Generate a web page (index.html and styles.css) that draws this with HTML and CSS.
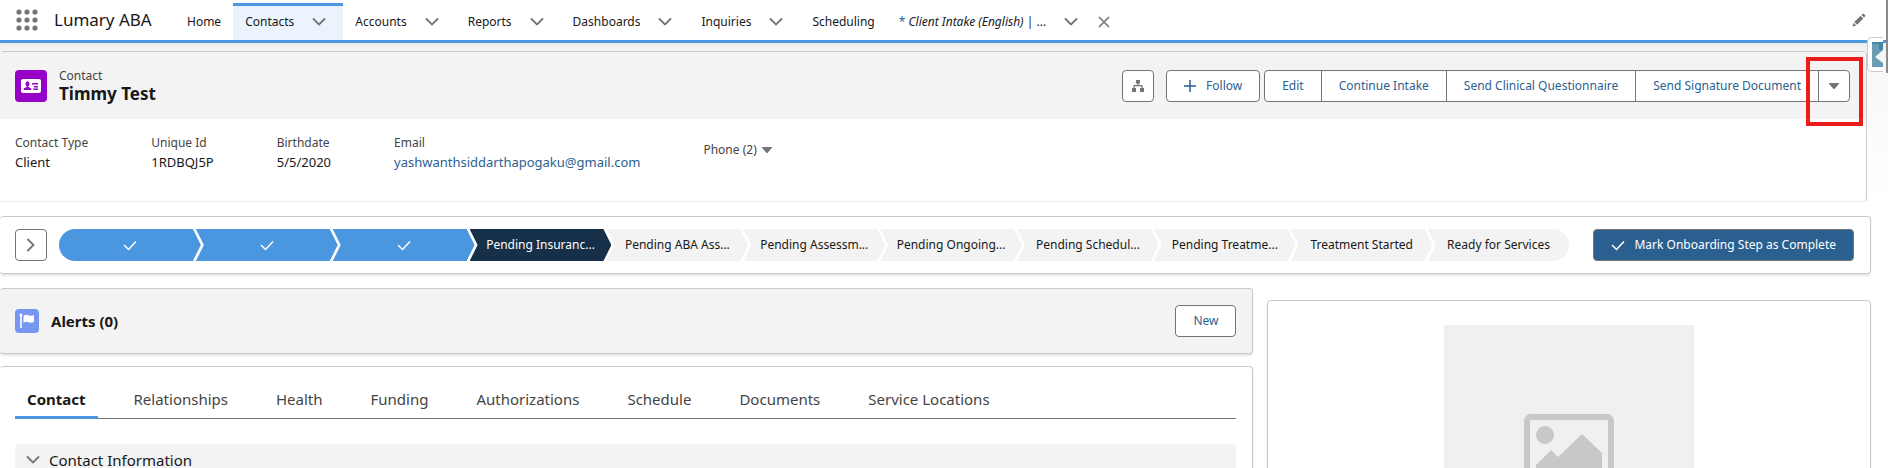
FILE: index.html
```html
<!DOCTYPE html>
<html lang="en">
<head>
    <meta charset="UTF-8">
    <meta name="viewport" content="width=device-width, initial-scale=1.0">
    <title>Timmy Test | Contact</title>
    <link rel="stylesheet" href="styles.css">
</head>
<body>
    <!-- shared icons -->
    <svg class="defs" width="0" height="0">
        <symbol id="chevron" viewBox="0 0 14 14"><path d="M1.5 4 7 9.5l5.5-5.500" fill="none" stroke="currentColor" stroke-width="1.8" stroke-linecap="round"/></symbol>
        <symbol id="check" viewBox="0 0 14 14"><path d="M1 7 5.500 11.500 13 3.500" fill="none" stroke="currentColor" stroke-width="1.5"/></symbol>
        <symbol id="down" viewBox="0 0 14 14"><path d="M2.6 4h8.8q1.2 0 .4 1L7.7 9.8q-.7.7-1.4 0L2.2 5q-.8-1 .4-1z" fill="currentColor"/></symbol>
    </svg>

    <header class="nav">
        <button class="waffle" aria-label="App Launcher">
            <svg width="22" height="22" viewBox="0 0 22 22" fill="#747474">
                <circle cx="3" cy="3" r="2.6"/><circle cx="11" cy="3" r="2.6"/><circle cx="19" cy="3" r="2.6"/>
                <circle cx="3" cy="11" r="2.6"/><circle cx="11" cy="11" r="2.6"/><circle cx="19" cy="11" r="2.6"/>
                <circle cx="3" cy="19" r="2.6"/><circle cx="11" cy="19" r="2.6"/><circle cx="19" cy="19" r="2.6"/>
            </svg>
        </button>
        <span class="app-name">Lumary ABA</span>
        <nav class="nav-items">
            <div class="nav-item"><a href="#">Home</a></div>
            <div class="nav-item active"><a href="#">Contacts</a><button aria-label="Contacts list"><svg class="icon"><use href="#chevron"/></svg></button></div>
            <div class="nav-item"><a href="#">Accounts</a><button aria-label="Accounts list"><svg class="icon"><use href="#chevron"/></svg></button></div>
            <div class="nav-item"><a href="#">Reports</a><button aria-label="Reports list"><svg class="icon"><use href="#chevron"/></svg></button></div>
            <div class="nav-item"><a href="#">Dashboards</a><button aria-label="Dashboards list"><svg class="icon"><use href="#chevron"/></svg></button></div>
            <div class="nav-item"><a href="#">Inquiries</a><button aria-label="Inquiries list"><svg class="icon"><use href="#chevron"/></svg></button></div>
            <div class="nav-item"><a href="#">Scheduling</a></div>
            <div class="nav-item temp"><a href="#"><span class="star">*</span> <i>Client Intake (English)</i> | ...</a><button aria-label="Tab actions"><svg class="icon"><use href="#chevron"/></svg></button><button class="close" aria-label="Close tab"><svg class="icon" viewBox="0 0 14 14"><path d="M2 2l10 10M12 2 2 12" stroke="currentColor" stroke-width="1.6"/></svg></button></div>
        </nav>
        <button class="edit-nav" aria-label="Edit navigation">
            <svg width="14" height="14" viewBox="0 0 14 14" fill="#747474"><path d="M.6 13.4 1.6 9.800 4.200 12.400zM2.300 9 8.600 2.700l2.700 2.700L5 11.700zM9.400 1.900l1-1q.8-.6 1.500 0l1.200 1.200q.7.7 0 1.500l-1 1z"/></svg>
        </button>
    </header>

    <main class="page">
        <section class="card record">
            <div class="record-head">
                <span class="record-icon">
                    <svg width="20" height="14" viewBox="0 0 20 14"><rect width="20" height="14" rx="2" fill="#fff"/><g fill="#9602c7"><ellipse cx="6.500" cy="4.800" rx="2" ry="2.500"/><path d="M5.700 6.500h1.600v1.600l2.300 1q.7.400.7 1.900H2.700q0-1.500.7-1.900l2.300-1z"/><path d="M11 4h6v1.500h-6zM13 7h4v1.500h-4zM12 9.500h5V11h-4.500z"/></g></svg>
                </span>
                <div class="record-title">
                    <span class="entity">Contact</span>
                    <h1>Timmy Test</h1>
                </div>
                <div class="actions">
                    <button class="btn square" aria-label="View hierarchy">
                        <svg width="12" height="12" viewBox="0 0 12 12" fill="#747474"><path d="M4 0h4v3.500H6.600V5h3.200q.8 0 .8.8V8H12v4H8V8h1.400V6.200H2.600V8H4v4H0V8h1.400V5.800q0-.8.8-.8h3.200V3.500H4z"/></svg>
                    </button>
                    <button class="btn follow"><svg width="12" height="12" viewBox="0 0 12 12"><path d="M6 0v12M0 6h12" stroke="#2b5f8f" stroke-width="1.500"/></svg>Follow</button>
                    <div class="group">
                        <button class="btn">Edit</button>
                        <button class="btn">Continue Intake</button>
                        <button class="btn">Send Clinical Questionnaire</button>
                        <button class="btn">Send Signature Document</button>
                        <div class="more">
                            <button class="btn square" aria-label="Show more actions"><svg class="icon"><use href="#down"/></svg></button>
                            <span class="highlight"></span>
                        </div>
                    </div>
                </div>
            </div>
            <dl class="details">
                <div class="field"><dt>Contact Type</dt><dd>Client</dd></div>
                <div class="field"><dt>Unique Id</dt><dd>1RDBQJ5P</dd></div>
                <div class="field"><dt>Birthdate</dt><dd>5/5/2020</dd></div>
                <div class="field"><dt>Email</dt><dd><a href="#">yashwanthsiddarthapogaku@gmail.com</a></dd></div>
                <div class="field phone"><dt><button>Phone (2)<svg class="icon"><use href="#down"/></svg></button></dt></div>
            </dl>
        </section>

        <section class="card path">
            <button class="btn square" aria-label="Show details"><svg class="icon right"><use href="#chevron"/></svg></button>
            <ol class="steps">
                <li class="done"><svg class="icon"><use href="#check"/></svg></li>
                <li class="done"><svg class="icon"><use href="#check"/></svg></li>
                <li class="done"><svg class="icon"><use href="#check"/></svg></li>
                <li class="current">Pending Insuranc...</li>
                <li>Pending ABA Ass...</li>
                <li>Pending Assessm...</li>
                <li>Pending Ongoing...</li>
                <li>Pending Schedul...</li>
                <li>Pending Treatme...</li>
                <li>Treatment Started</li>
                <li>Ready for Services</li>
            </ol>
            <button class="btn brand"><svg class="icon"><use href="#check"/></svg>Mark Onboarding Step as Complete</button>
        </section>

        <div class="columns">
            <div class="left">
                <section class="card alerts">
                    <span class="alert-icon">
                        <svg width="16" height="16" viewBox="0 0 16 16" fill="#fff"><circle cx="2" cy="2" r="1.400"/><path d="M1.200 3h1.600v12H1.200zM4.500 3q2.500-2.200 5-.8t5-.2q.5-.1.500.5v6.300q-2.800 1.700-5.300.4t-5.200.6z"/></svg>
                    </span>
                    <h2>Alerts (0)</h2>
                    <button class="btn">New</button>
                </section>
                <section class="card detail">
                    <nav class="tabs">
                        <a class="selected" href="#">Contact</a>
                        <a href="#">Relationships</a>
                        <a href="#">Health</a>
                        <a href="#">Funding</a>
                        <a href="#">Authorizations</a>
                        <a href="#">Schedule</a>
                        <a href="#">Documents</a>
                        <a href="#">Service Locations</a>
                    </nav>
                    <button class="section-head"><svg class="icon"><use href="#chevron"/></svg>Contact Information</button>
                </section>
            </div>
            <aside class="card photo">
                <div class="placeholder">
                    <svg width="90" height="72" viewBox="0 0 90 72"><rect x="3" y="3" width="84" height="66" rx="4" fill="none" stroke="#c8c8c8" stroke-width="6"/><circle cx="21" cy="21" r="9" fill="#c8c8c8"/><path d="M12 51 27 36l7 7 24-23 20 19v21H12z" fill="#c8c8c8"/></svg>
                </div>
            </aside>
        </div>
    </main>

    <button class="side-tab" aria-label="Open panel"><svg width="11" height="25" viewBox="0 0 11 25"><path fill="#6a9cb4" d="M0 0h11v25H0z"/><path fill="#3f86a8" d="M0 0h11v2H0zM7 2h4v6H7z"/><path fill="#f4f4f4" d="M3 15 11 8v13z"/></svg></button>
    <span class="scroll-thumb"></span>
</body>
</html>
```
FILE: styles.css
```css
*{
    box-sizing:border-box;
}
body{
    margin:0;
    height:100vh;
    overflow:hidden;
    background:#fff;
    color:#181818;
    font-family:"Noto Sans", "Open Sans", sans-serif;
    font-size:12px;
    line-height:18px;
}
h1, h2, dl, dd, ol{
    margin:0;
    padding:0;
}
a{
    color:inherit;
    text-decoration:none;
}
button{
    padding:0;
    border:0;
    background:none;
    color:inherit;
    font:inherit;
    cursor:pointer;
}
svg{
    display:block;
    flex:none;
}
.defs{
    position:absolute;
}
.icon{
    width:14px;
    height:14px;
}

/* navigation */
.nav{
    display:flex;
    align-items:center;
    height:43px;
    padding-left:16px;
    padding-right:22px;
    border-bottom:3px solid #4a97e0;
    background:#fff;
}
.app-name{
    width:121px;
    margin-left:16px;
    font-size:17px;
    line-height:24px;
    white-space:nowrap;
}
.nav-items{
    display:flex;
    align-self:stretch;
    flex:1;
    padding-top:3px;
}
.nav-item{
    display:flex;
    align-items:center;
    padding:0 12px;
    border-top:3px solid transparent;
    padding-bottom:2px;
    white-space:nowrap;
}
.nav-item button{
    margin-left:18px;
    margin-right:5px;
    color:#747474;
}
.nav-item.active{
    border-top-color:#4a97e0;
    background:#ebf4fd;
}
.nav-item .close{
    margin-left:14px;
}
.star{
    color:#2b5f8f;
}

/* page and cards */
.page{
    padding:8px 17px 0 0;
    background:linear-gradient(#ececec, #f7f7f7 10px, #fff 160px);
}
.card{
    border:1px solid #c9c9c9;
    border-radius:4px;
    background:#fff;
    box-shadow:0 2px 2px rgba(0,0,0,.1);
}
.btn{
    display:flex;
    align-items:center;
    justify-content:center;
    height:32px;
    padding:0 17px;
    border:1px solid #747474;
    border-radius:4px;
    background:#fff;
    color:#2b5f8f;
    white-space:nowrap;
}
.btn.square{
    width:32px;
    padding:0;
    color:#747474;
}

/* record header */
.record{
    height:151px;
    margin-right:4px;
    border-left:0;
    border-bottom-color:#ececec;
    box-shadow:none;
}
.record-head{
    display:flex;
    align-items:center;
    height:67px;
    padding:0 16px 0 15px;
    background:#f3f3f3;
}
.record-icon{
    display:flex;
    align-items:center;
    justify-content:center;
    width:32px;
    height:32px;
    border-radius:4px;
    background:#9602c7;
}
.record-title{
    margin-left:12px;
}
.entity{
    display:block;
    color:#444;
    line-height:16px;
}
.record-title h1{
    font-size:17px;
    line-height:20px;
}
.actions{
    display:flex;
    margin-left:auto;
}
.follow{
    gap:10px;
    margin-left:12px;
    margin-right:4px;
}
.group{
    display:flex;
}
.group .btn{
    margin-right:-1px;
    border-radius:0;
}
.group > .btn:first-child{
    border-radius:4px 0 0 4px;
}
.more{
    position:relative;
}
.more .btn{
    margin-right:0;
    border-radius:0 4px 4px 0;
}
.highlight{
    position:absolute;
    top:-13px;
    left:-12px;
    width:57px;
    height:69px;
    border:4px solid #ec1c1c;
    pointer-events:none;
}
.details{
    display:flex;
    gap:63px;
    padding:15px 15px 0;
}
.field dt{
    color:#444;
}
.field dd{
    font-size:13px;
    line-height:20px;
}
.field a{
    color:#2b5f8f;
}
.phone{
    padding-top:7px;
}
.phone .icon{
    color:#747474;
}
.phone button{
    display:flex;
    align-items:center;
    gap:3px;
}

/* path */
.path{
    display:flex;
    align-items:center;
    gap:12px;
    height:58px;
    margin-top:14px;
    padding:0 16px 0 15px;
    border-left:0;
}
.right{
    transform:rotate(-90deg);
}
.steps{
    display:flex;
    flex:1;
    margin-right:12px;
    border-radius:16px;
    overflow:hidden;
    list-style:none;
}
.steps li{
    display:flex;
    align-items:center;
    justify-content:center;
    flex:1 1 0;
    min-width:0;
    height:32px;
    margin-left:-5px;
    background:#f3f3f3;
    clip-path:polygon(0 0, calc(100% - 8px) 0, 100% 50%, calc(100% - 8px) 100%, 0 100%, 8px 50%);
    white-space:nowrap;
}
.steps li:first-child{
    margin-left:0;
    clip-path:polygon(0 0, calc(100% - 8px) 0, 100% 50%, calc(100% - 8px) 100%, 0 100%);
}
.steps li:last-child{
    clip-path:polygon(0 0, 100% 0, 100% 100%, 0 100%, 8px 50%);
}
.steps .done{
    background:#4a97e0;
    color:#fff;
}
.steps .current{
    background:#16304a;
    color:#fff;
}
.btn.brand{
    gap:9px;
    background:#2b5f8f;
    color:#fff;
}

/* columns */
.columns{
    display:grid;
    grid-template-columns:27fr 13fr;
    gap:14px;
    margin-top:14px;
}
.alerts{
    display:flex;
    align-items:center;
    height:66px;
    padding:0 16px 0 15px;
    border-left:0;
    background:#f3f3f3;
}
.alert-icon{
    display:flex;
    align-items:center;
    justify-content:center;
    width:24px;
    height:24px;
    border-radius:4px;
    background:#7796f0;
}
.alerts h2{
    margin-left:12px;
    font-size:15px;
}
.alerts .btn{
    margin-left:auto;
}
.detail{
    height:300px;
    margin-top:12px;
    padding:12px 16px 0 15px;
    border-left:0;
}
.tabs{
    display:flex;
    gap:24px;
    height:40px;
    border-bottom:1px solid #747474;
    color:#444;
    font-size:15px;
    line-height:40px;
}
.tabs a{
    height:40px;
    padding:0 12px;
}
.tabs .selected{
    border-bottom:3px solid #4a97e0;
    color:#181818;
    font-weight:bold;
}
.section-head{
    display:flex;
    align-items:center;
    gap:9px;
    width:100%;
    height:32px;
    margin-top:25px;
    padding:0 11px;
    border-radius:4px;
    background:#f3f3f3;
    font-size:15px;
}
.section-head .icon{
    color:#747474;
}
.photo{
    height:366px;
    margin-top:12px;
    padding-top:24px;
}
.placeholder{
    display:flex;
    align-items:center;
    justify-content:center;
    width:250px;
    height:250px;
    margin:0 auto;
    background:#eff1f0;
}

/* floating panel handle and scrollbar */
.side-tab{
    position:absolute;
    top:37px;
    right:5px;
    padding:4px 0 4px 4px;
    border:1px solid #ccc;
    border-right:0;
    border-radius:5px 0 0 5px;
    background:#fff;
}
.scroll-thumb{
    position:absolute;
    top:0;
    right:0;
    width:2px;
    height:73px;
    background:#8a8a8a;
}
```
